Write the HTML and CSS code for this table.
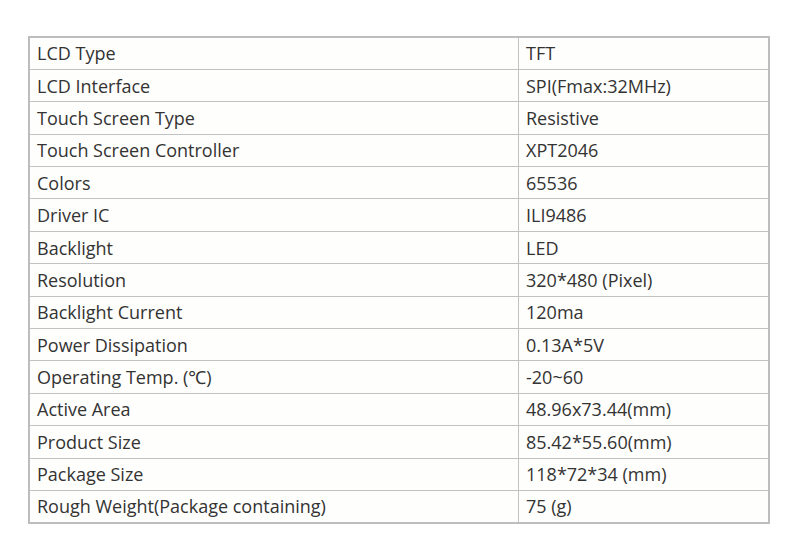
FILE: index.html
```html
<!DOCTYPE html>
<html>
<head>
<meta charset="utf-8">
<link rel="stylesheet" href="styles.css">
</head>
<body>
<div class="page">
<table class="spec">
<tbody>
<tr><td class="k">LCD Type</td><td>TFT</td></tr>
<tr><td class="k">LCD Interface</td><td>SPI(Fmax:32MHz)</td></tr>
<tr><td class="k">Touch Screen Type</td><td>Resistive</td></tr>
<tr><td class="k">Touch Screen Controller</td><td>XPT2046</td></tr>
<tr><td class="k">Colors</td><td>65536</td></tr>
<tr><td class="k">Driver IC</td><td>ILI9486</td></tr>
<tr><td class="k">Backlight</td><td>LED</td></tr>
<tr><td class="k">Resolution</td><td>320*480 (Pixel)</td></tr>
<tr><td class="k">Backlight Current</td><td>120ma</td></tr>
<tr><td class="k">Power Dissipation</td><td>0.13A*5V</td></tr>
<tr><td class="k">Operating Temp. (℃)</td><td>-20~60</td></tr>
<tr><td class="k">Active Area</td><td>48.96x73.44(mm)</td></tr>
<tr><td class="k">Product Size</td><td>85.42*55.60(mm)</td></tr>
<tr><td class="k">Package Size</td><td>118*72*34 (mm)</td></tr>
<tr><td class="k">Rough Weight(Package containing)</td><td>75 (g)</td></tr>
</tbody>
</table>
</div>
</body>
</html>
```
FILE: styles.css
```css
html, body {
  margin: 0;
  padding: 0;
  background: #ffffff;
}
.page {
  padding: 36px 30px 0 28px;
}
.spec {
  width: 742px;
  border-collapse: collapse;
  border: 2px solid #bdbdbd;
  font-family: "Open Sans", "Noto Sans", sans-serif;
  font-size: 18px;
  color: #333333;
  background: #fefefc;
}
.spec tr {
  height: 32.4px;
}
.spec td {
  border: 1px solid #c2c2c2;
  padding: 0 7px;
  vertical-align: middle;
  line-height: 20px;
}
.spec td.k {
  width: 474px;
}
```
